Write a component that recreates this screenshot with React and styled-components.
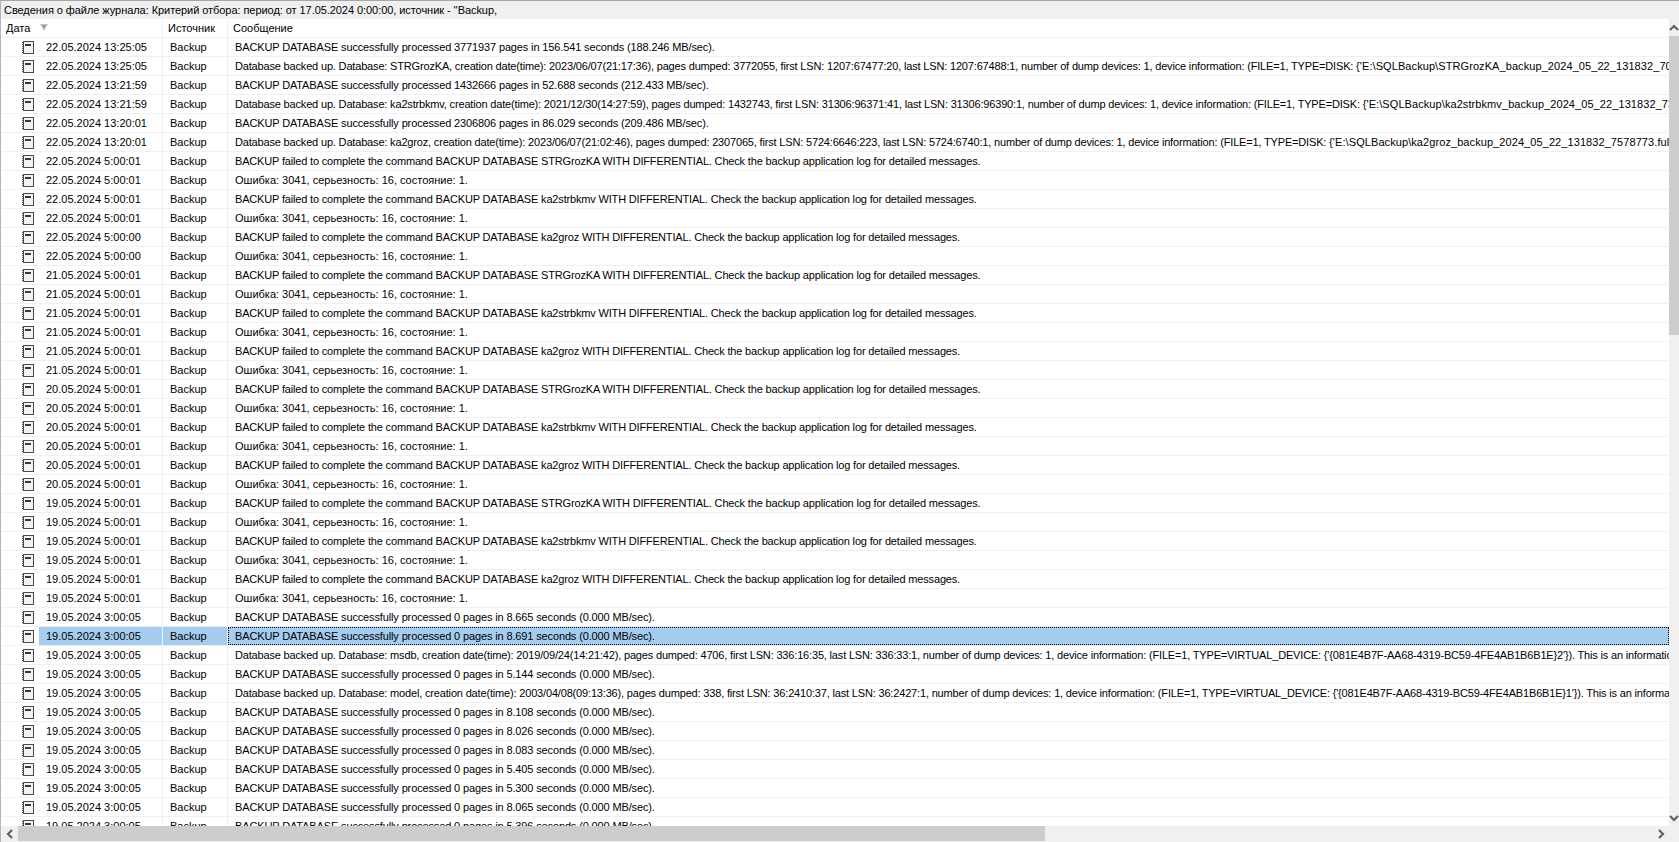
import React from 'react';
import styled, { createGlobalStyle } from 'styled-components';

const GlobalStyle = createGlobalStyle`
  html, body {
    margin: 0;
    padding: 0;
    overflow: hidden;
  }
`;

const fail = (db) =>
  `BACKUP failed to complete the command BACKUP DATABASE ${db} WITH DIFFERENTIAL. Check the backup application log for detailed messages.`;
const ok = (pages, sec, rate) =>
  `BACKUP DATABASE successfully processed ${pages} pages in ${sec} seconds (${rate} MB/sec).`;
const ERR = 'Ошибка: 3041, серьезность: 16, состояние: 1.';
const TAIL = "This is an informational message only. No user action is required.";

const failDay = (day, last = '5:00:01') => [
  [`${day} 5:00:01`, fail('STRGrozKA')],
  [`${day} 5:00:01`, ERR],
  [`${day} 5:00:01`, fail('ka2strbkmv')],
  [`${day} 5:00:01`, ERR],
  [`${day} ${last}`, fail('ka2groz')],
  [`${day} ${last}`, ERR],
];

const rows = [
  ['22.05.2024 13:25:05', ok(3771937, '156.541', '188.246')],
  ['22.05.2024 13:25:05', "Database backed up. Database: STRGrozKA, creation date(time): 2023/06/07(21:17:36), pages dumped: 3772055, first LSN: 1207:67477:20, last LSN: 1207:67488:1, number of dump devices: 1, device information: (FILE=1, TYPE=DISK: {'E:\\SQLBackup\\STRGrozKA_backup_2024_05_22_131832_7091234.full'}). " + TAIL],
  ['22.05.2024 13:21:59', ok(1432666, '52.688', '212.433')],
  ['22.05.2024 13:21:59', "Database backed up. Database: ka2strbkmv, creation date(time): 2021/12/30(14:27:59), pages dumped: 1432743, first LSN: 31306:96371:41, last LSN: 31306:96390:1, number of dump devices: 1, device information: (FILE=1, TYPE=DISK: {'E:\\SQLBackup\\ka2strbkmv_backup_2024_05_22_131832_7391234.full'}). " + TAIL],
  ['22.05.2024 13:20:01', ok(2306806, '86.029', '209.486')],
  ['22.05.2024 13:20:01', "Database backed up. Database: ka2groz, creation date(time): 2023/06/07(21:02:46), pages dumped: 2307065, first LSN: 5724:6646:223, last LSN: 5724:6740:1, number of dump devices: 1, device information: (FILE=1, TYPE=DISK: {'E:\\SQLBackup\\ka2groz_backup_2024_05_22_131832_7578773.full'}). " + TAIL],
  ...failDay('22.05.2024', '5:00:00'),
  ...failDay('21.05.2024'),
  ...failDay('20.05.2024'),
  ...failDay('19.05.2024'),
  ['19.05.2024 3:00:05', ok(0, '8.665', '0.000')],
  ['19.05.2024 3:00:05', ok(0, '8.691', '0.000'), true],
  ['19.05.2024 3:00:05', "Database backed up. Database: msdb, creation date(time): 2019/09/24(14:21:42), pages dumped: 4706, first LSN: 336:16:35, last LSN: 336:33:1, number of dump devices: 1, device information: (FILE=1, TYPE=VIRTUAL_DEVICE: {'{081E4B7F-AA68-4319-BC59-4FE4AB1B6B1E}2'}). " + TAIL],
  ['19.05.2024 3:00:05', ok(0, '5.144', '0.000')],
  ['19.05.2024 3:00:05', "Database backed up. Database: model, creation date(time): 2003/04/08(09:13:36), pages dumped: 338, first LSN: 36:2410:37, last LSN: 36:2427:1, number of dump devices: 1, device information: (FILE=1, TYPE=VIRTUAL_DEVICE: {'{081E4B7F-AA68-4319-BC59-4FE4AB1B6B1E}1'}). " + TAIL],
  ['19.05.2024 3:00:05', ok(0, '8.108', '0.000')],
  ['19.05.2024 3:00:05', ok(0, '8.026', '0.000')],
  ['19.05.2024 3:00:05', ok(0, '8.083', '0.000')],
  ['19.05.2024 3:00:05', ok(0, '5.405', '0.000')],
  ['19.05.2024 3:00:05', ok(0, '5.300', '0.000')],
  ['19.05.2024 3:00:05', ok(0, '8.065', '0.000')],
  ['19.05.2024 3:00:05', ok(0, '5.396', '0.000')],
];

// the reference font is hinted, so each kind of message runs a bit wider or narrower
const spacingOf = (message) => {
  if (message.startsWith('Ошибка')) return 0;
  if (message.startsWith('BACKUP DATABASE')) return -0.135;
  return -0.17;
};

function Message({ text }) {
  const at = text.indexOf("{'E:");
  if (at < 0) return text;
  return (
    <>
      {text.slice(0, at)}
      <PathText>{text.slice(at)}</PathText>
    </>
  );
}

function LogIcon() {
  return (
    <svg width="12" height="13" viewBox="0 0 12 13" shapeRendering="crispEdges">
      <rect x="1" y="0" width="11" height="13" fill="#4a4a4a" />
      <rect x="2" y="1" width="9" height="11" fill="#f2f2f2" />
      <rect x="3" y="3" width="6" height="2" fill="#3a3a3a" />
      {[1, 3, 5, 7, 9, 11].map((y) => (
        <rect key={y} x="0" y={y} width="1" height="1" fill="#4a4a4a" />
      ))}
    </svg>
  );
}

function SortMark() {
  return (
    <svg width="8" height="7" viewBox="0 0 8 7">
      <path d="M0 0H8L4 7Z" fill="#c4c4c4" />
      <path d="M2 1H6L4 5Z" fill="#9a9a9a" />
    </svg>
  );
}

function Chevron({ dir }) {
  const d = {
    up: 'M1 6L5 2L9 6',
    down: 'M1 2L5 6L9 2',
    left: 'M6 1L2 5L6 9',
    right: 'M2 1L6 5L2 9',
  }[dir];
  const vertical = dir === 'up' || dir === 'down';
  return (
    <svg width={vertical ? 10 : 8} height={vertical ? 8 : 10} viewBox={vertical ? '0 0 10 8' : '0 0 8 10'}>
      <path d={d} fill="none" stroke="#606060" strokeWidth="2.2" />
    </svg>
  );
}

export default function App() {
  return (
    <>
      <GlobalStyle />
      <Window>
        <StatusBar>Сведения о файле журнала: Критерий отбора: период: от 17.05.2024 0:00:00, источник - ''Backup,</StatusBar>
        <Body>
          <Grid>
            <HeaderRow>
              <HeaderCell $width={162}>
                <span>Дата</span>
                <SortBox><SortMark /></SortBox>
              </HeaderCell>
              <HeaderCell $width={65}>Источник</HeaderCell>
              <HeaderCell $grow>Сообщение</HeaderCell>
            </HeaderRow>
            {rows.map(([date, message, selected], i) => (
              <Row key={i}>
                <IconCell><LogIcon /></IconCell>
                <Cell $width={124} $selected={selected}>{date}</Cell>
                <Cell $width={65} $selected={selected}>Backup</Cell>
                <MessageCell $selected={selected} $spacing={spacingOf(message)}>
                  <Message text={message} />
                </MessageCell>
              </Row>
            ))}
          </Grid>
          <VScroll>
            <VButton><Chevron dir="up" /></VButton>
            <VThumb />
            <Spacer />
            <VButton><Chevron dir="down" /></VButton>
          </VScroll>
        </Body>
        <HScroll>
          <HButton><Chevron dir="left" /></HButton>
          <HThumb />
          <Spacer />
          <HButton><Chevron dir="right" /></HButton>
          <Corner />
        </HScroll>
      </Window>
    </>
  );
}

const Window = styled.div`
  box-sizing: border-box;
  width: 1679px;
  height: 842px;
  display: flex;
  flex-direction: column;
  overflow: hidden;
  background: #f0f0f0;
  border-top: 1px solid #a5a5ad;
  border-left: 1px solid #b4b4bc;
  font-family: "Liberation Sans", Arial, sans-serif;
  font-size: 11px;
  color: #000;
`;

const StatusBar = styled.div`
  height: 18px;
  line-height: 19px;
  padding-left: 3px;
  letter-spacing: -0.06px;
  white-space: nowrap;
`;

const Body = styled.div`
  flex: 1;
  min-height: 0;
  display: flex;
`;

const Grid = styled.div`
  flex: 1;
  min-width: 0;
  overflow: hidden;
  background: #fff;
`;

const HeaderRow = styled.div`
  box-sizing: border-box;
  height: 19px;
  display: flex;
  border-bottom: 1px solid #f0f0f0;
`;

const HeaderCell = styled.div`
  box-sizing: border-box;
  display: flex;
  align-items: center;
  flex: ${({ $grow }) => ($grow ? '1' : 'none')};
  width: ${({ $width }) => ($width ? `${$width}px` : 'auto')};
  padding-left: 5px;
  border-right: ${({ $grow }) => ($grow ? 'none' : '1px solid #f0f0f0')};
  white-space: nowrap;
`;

const SortBox = styled.span`
  display: flex;
  margin: -2px 0 0 10px;
`;

const Row = styled.div`
  box-sizing: border-box;
  height: 19px;
  display: flex;
  border-bottom: 1px solid #f0f0f0;
  line-height: 18px;
  white-space: nowrap;
`;

const IconCell = styled.div`
  flex: none;
  width: 38px;
  padding-left: 21px;
  box-sizing: border-box;
  display: flex;
  align-items: center;
`;

const Cell = styled.div`
  box-sizing: border-box;
  flex: none;
  width: ${({ $width }) => $width}px;
  padding-left: 7px;
  overflow: hidden;
  border-right: 1px solid #f0f0f0;
  background: ${({ $selected }) => ($selected ? '#a4cdf0' : 'transparent')};
`;

const MessageCell = styled.div`
  box-sizing: border-box;
  flex: 1;
  min-width: 0;
  padding-left: 7px;
  overflow: hidden;
  letter-spacing: ${({ $spacing }) => $spacing}px;
  background: ${({ $selected }) => ($selected ? '#a4cdf0' : 'transparent')};
  outline: ${({ $selected }) => ($selected ? '1px dotted #000' : 'none')};
  outline-offset: -1px;
`;

const PathText = styled.span`
  letter-spacing: 0.08px;
`;

const VScroll = styled.div`
  flex: none;
  width: 10px;
  display: flex;
  flex-direction: column;
`;

const VButton = styled.div`
  flex: none;
  height: 17px;
  display: flex;
  align-items: center;
  justify-content: center;
`;

const VThumb = styled.div`
  flex: none;
  height: 299px;
  background: #cdcdcd;
`;

const Spacer = styled.div`
  flex: 1;
`;

const HScroll = styled.div`
  flex: none;
  height: 16px;
  display: flex;
`;

const HButton = styled.div`
  flex: none;
  width: 17px;
  height: 15px;
  display: flex;
  align-items: center;
  justify-content: center;
`;

const HThumb = styled.div`
  flex: none;
  width: 1027px;
  height: 15px;
  background: #cdcdcd;
`;

const Corner = styled.div`
  flex: none;
  width: 10px;
`;
